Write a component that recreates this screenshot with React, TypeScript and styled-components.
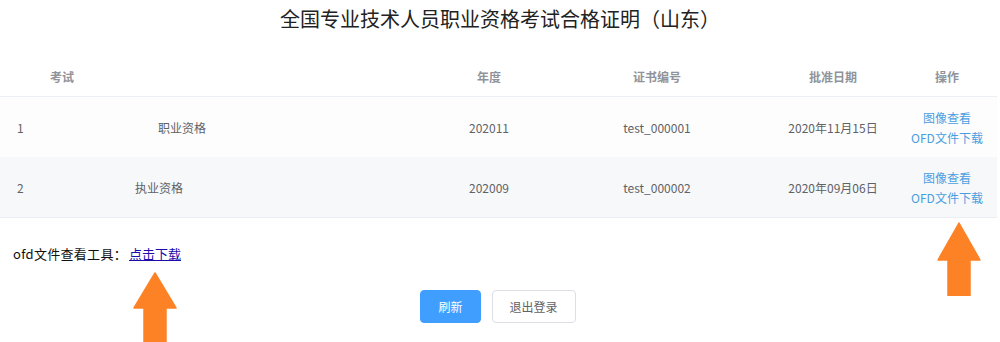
import styled, { createGlobalStyle } from "styled-components";

const GlobalStyle = createGlobalStyle`
  body {
    margin: 0;
    background: #fff;
    font-family: "Noto Sans CJK SC", "Noto Sans", sans-serif;
  }
`;

interface CertRow {
  no: number;
  name: string;
  indent: number;
  year: string;
  code: string;
  date: string;
}

const rows: CertRow[] = [
  { no: 1, name: "职业资格", indent: 118, year: "202011", code: "test_000001", date: "2020年11月15日" },
  { no: 2, name: "执业资格", indent: 95, year: "202009", code: "test_000002", date: "2020年09月06日" },
];

const UpArrow = ({ head, shaft }: { head: number; shaft: number }) => {
  // head = triangle height, shaft = shaft length
  const w = 44;
  const h = head + shaft;
  return (
    <svg width={w} height={h} viewBox={`0 0 ${w} ${h}`}>
      <path
        d={`M22 1 L43 ${head} L33 ${head} L33 ${h} L11 ${h} L11 ${head} L1 ${head} Z`}
        fill="#fd8226"
        stroke="#fd8226"
        strokeWidth="1.5"
        strokeLinejoin="round"
      />
    </svg>
  );
};

export default function App() {
  return (
    <Page>
      <GlobalStyle />
      <Title>全国专业技术人员职业资格考试合格证明（山东）</Title>
      <Table>
        <HeadRow>
          <Cell />
          <Cell $align="left" $indent={10}>考试</Cell>
          <Cell>年度</Cell>
          <Cell>证书编号</Cell>
          <Cell>批准日期</Cell>
          <Cell>操作</Cell>
          <Cell />
        </HeadRow>
        {rows.map((r, i) => (
          <BodyRow key={r.no} $striped={i % 2 === 1} $last={i === rows.length - 1}>
            <Cell $align="left" $indent={17}>{r.no}</Cell>
            <Cell $align="left" $indent={r.indent}>{r.name}</Cell>
            <Cell>{r.year}</Cell>
            <Cell>{r.code}</Cell>
            <Cell>{r.date}</Cell>
            <Actions>
              <ActionLink>图像查看</ActionLink>
              <ActionLink>OFD文件下载</ActionLink>
            </Actions>
            <Cell />
          </BodyRow>
        ))}
      </Table>
      <Tools>
        ofd文件查看工具：<ToolLink href="#">点击下载</ToolLink>
      </Tools>
      <Buttons>
        <Button $primary>刷新</Button>
        <Button>退出登录</Button>
      </Buttons>
      <ArrowMark $left={133} $top={272}>
        <UpArrow head={36} shaft={36} />
      </ArrowMark>
      <ArrowMark $left={937} $top={222}>
        <UpArrow head={38} shaft={36} />
      </ArrowMark>
    </Page>
  );
}

const Page = styled.div`
  position: relative;
  width: 1000px;
  height: 342px;
  overflow: hidden;
`;

const Title = styled.h1`
  margin: 0;
  padding-top: 7px;
  font-size: 20px;
  line-height: 24px;
  font-weight: 400;
  color: #222;
  text-align: center;
`;

const Table = styled.div`
  margin-top: 25px;
  width: 997px;
  font-size: 12px;
`;

const columns = "40px 380px 138px 198px 154px 74px 1fr";

const HeadRow = styled.div`
  display: grid;
  grid-template-columns: ${columns};
  height: 40px;
  align-items: center;
  border-bottom: 1px solid #ebeef5;
  color: #909399;
  font-weight: 700;
`;

const BodyRow = styled.div<{ $striped?: boolean; $last?: boolean }>`
  display: grid;
  grid-template-columns: ${columns};
  height: 60px;
  align-items: center;
  background: ${(p) => (p.$striped ? "#f7f8fa" : "#fdfdfd")};
  border-bottom: ${(p) => (p.$last ? "1px solid #ebeef5" : "none")};
  color: #606266;
`;

const Cell = styled.div<{ $align?: "left" | "center"; $indent?: number }>`
  text-align: ${(p) => p.$align ?? "center"};
  padding-left: ${(p) => p.$indent ?? 0}px;
  white-space: nowrap;
`;

const Actions = styled.div`
  display: flex;
  flex-direction: column;
  align-items: center;
  padding-top: 2px;
  line-height: 20px;
  white-space: nowrap;
`;

const ActionLink = styled.span`
  color: #4a9ee0;
  cursor: pointer;
`;

const Tools = styled.div`
  margin-top: 26px;
  padding-left: 13px;
  font-size: 13px;
  line-height: 20px;
  letter-spacing: 0.3px;
  color: #111;
`;

const ToolLink = styled.a`
  margin-left: 2px;
  letter-spacing: 0;
  color: #1a0dab;
  text-decoration: underline;
`;

const Buttons = styled.div`
  display: flex;
  justify-content: center;
  gap: 11px;
  margin-top: 26px;
  padding-right: 4px;
`;

const Button = styled.button<{ $primary?: boolean }>`
  height: 33px;
  padding: 0 17px;
  border-radius: 4px;
  font-family: inherit;
  font-size: 12px;
  border: 1px solid ${(p) => (p.$primary ? "#409eff" : "#dcdfe6")};
  background: ${(p) => (p.$primary ? "#409eff" : "#fff")};
  color: ${(p) => (p.$primary ? "#fff" : "#606266")};
  cursor: pointer;
`;

const ArrowMark = styled.div<{ $left: number; $top: number }>`
  position: absolute;
  left: ${(p) => p.$left}px;
  top: ${(p) => p.$top}px;
  line-height: 0;
`;
